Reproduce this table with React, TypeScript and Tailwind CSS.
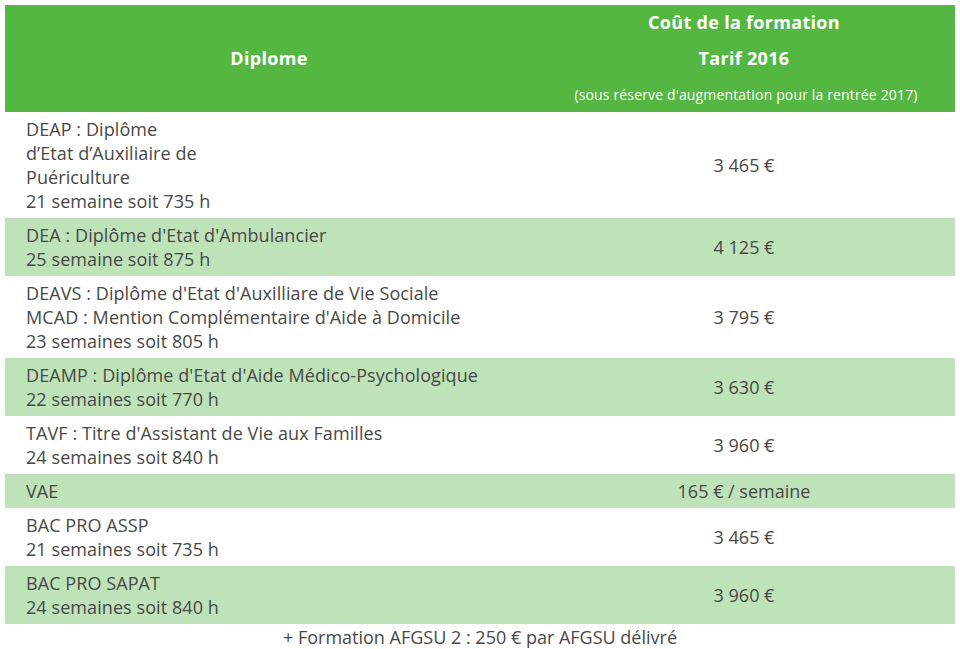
import React from "react";

const rows: { lines: string[]; price: string; green: boolean }[] = [
  {
    lines: ["DEAP : Diplôme", "d’Etat d’Auxiliaire de", "Puériculture", "21 semaine soit 735 h"],
    price: "3 465 €",
    green: false,
  },
  { lines: ["DEA : Diplôme d'Etat d'Ambulancier", "25 semaine soit 875 h"], price: "4 125 €", green: true },
  {
    lines: [
      "DEAVS : Diplôme d'Etat d'Auxilliare de Vie Sociale",
      "MCAD : Mention Complémentaire d'Aide à Domicile",
      "23 semaines soit 805 h",
    ],
    price: "3 795 €",
    green: false,
  },
  {
    lines: ["DEAMP : Diplôme d'Etat d'Aide Médico-Psychologique", "22 semaines soit 770 h"],
    price: "3 630 €",
    green: true,
  },
  {
    lines: ["TAVF : Titre d'Assistant de Vie aux Familles", "24 semaines soit 840 h"],
    price: "3 960 €",
    green: false,
  },
  { lines: ["VAE"], price: "165 € / semaine", green: true },
  { lines: ["BAC PRO ASSP", "21 semaines soit 735 h"], price: "3 465 €", green: false },
  { lines: ["BAC PRO SAPAT", "24 semaines soit 840 h"], price: "3 960 €", green: true },
];

export default function App() {
  return (
    <div
      className="w-[960px] h-[649px] bg-white text-[#484848] overflow-hidden"
      style={{ fontFamily: '"Open Sans", "Liberation Sans", sans-serif' }}
    >
      <div className="pt-[5px] pl-[5px]">
        <div className="w-[950px] grid grid-cols-[528px_422px]">
          <div className="bg-[#54b741] h-[106px] flex items-center justify-center text-white font-bold text-[18px] tracking-[0.3px]">
            Diplome
          </div>
          <div className="bg-[#54b741] h-[106px] flex flex-col justify-start items-center text-white">
            <div className="leading-[34px] font-bold text-[18px] tracking-[0.3px]">Coût de la formation</div>
            <div className="leading-[38px] font-bold text-[18px] tracking-[0.3px]">Tarif 2016</div>
            <div className="leading-[33px] pt-[1px] text-[14px] tracking-[0.15px] pl-[4px]">
              (sous réserve d'augmentation pour la rentrée 2017)
            </div>
          </div>
          <div className="col-span-2 h-[1px] bg-[#54b741]" />
          {rows.map((r, i) => (
            <React.Fragment key={i}>
              <div
                className={`${r.green ? "bg-[#bfe3b9]" : "bg-white"} pl-[21px] py-[5px] text-[18px] leading-[24px] tracking-[0.08px]`}
              >
                {r.lines.map((l, j) => (
                  <div key={j}>{l}</div>
                ))}
              </div>
              <div
                className={`${r.green ? "bg-[#bfe3b9]" : "bg-white"} flex items-center justify-center text-[18px] leading-[24px]`}
              >
                {r.price}
              </div>
            </React.Fragment>
          ))}
        </div>
        <div className="w-[950px] text-center text-[18px] leading-[24px] pt-[1px]">
          + Formation AFGSU 2 : 250 € par AFGSU délivré
        </div>
      </div>
    </div>
  );
}
